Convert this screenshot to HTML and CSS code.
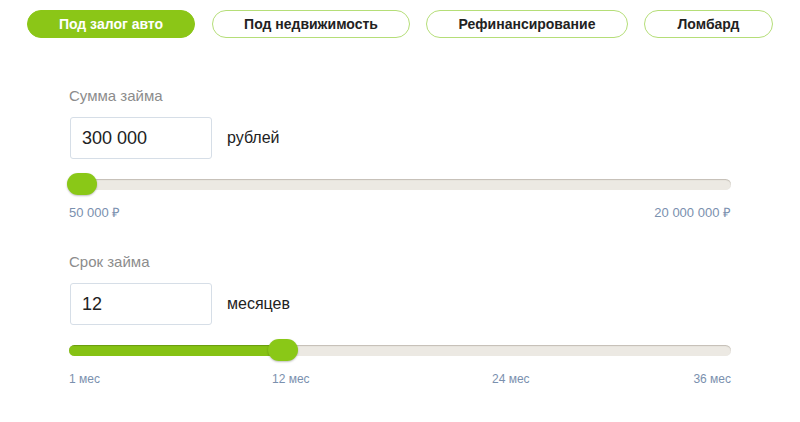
FILE: index.html
```html
<!DOCTYPE html>
<html lang="ru">
<head>
<meta charset="utf-8">
<link rel="stylesheet" href="styles.css">
</head>
<body>
<div class="page">
  <nav class="tabs">
    <button class="tab tab-active">Под залог авто</button>
    <button class="tab tab-2">Под недвижимость</button>
    <button class="tab tab-3">Рефинансирование</button>
    <button class="tab tab-4">Ломбард</button>
  </nav>

  <div class="calc">
    <section class="field">
      <div class="label">Сумма займа</div>
      <div class="row">
        <div class="input">300 000</div>
        <div class="unit">рублей</div>
      </div>
      <div class="slider">
        <div class="track"></div>
        <div class="thumb" style="left:-2px"></div>
      </div>
      <div class="scale">
        <span>50 000 ₽</span>
        <span>20 000 000 ₽</span>
      </div>
    </section>

    <section class="field field-2">
      <div class="label">Срок займа</div>
      <div class="row">
        <div class="input">12</div>
        <div class="unit">месяцев</div>
      </div>
      <div class="slider">
        <div class="track"><div class="fill" style="width:214px"></div></div>
        <div class="thumb" style="left:199px"></div>
      </div>
      <div class="ticks">
        <span>1 мес</span>
        <span>12 мес</span>
        <span>24 мес</span>
        <span>36 мес</span>
      </div>
    </section>
  </div>
</div>
</body>
</html>
```

FILE: styles.css
```css
* { box-sizing: border-box; }
html, body { margin: 0; padding: 0; background: #fff; }
body {
  font-family: "Liberation Sans", Arial, sans-serif;
  color: #222;
  width: 800px;
  height: 422px;
  overflow: hidden;
}
.page { padding-top: 10px; }

.tabs {
  display: flex;
  gap: 16px;
  padding-left: 27px;
}
.tab {
  height: 28px;
  border-radius: 14px;
  border: 1.5px solid #b5de78;
  background: #fff;
  font-family: "Liberation Sans", Arial, sans-serif;
  font-weight: bold;
  font-size: 14px;
  color: #222;
  padding: 0;
  display: flex;
  align-items: center;
  justify-content: center;
}
.tab-active {
  width: 168px;
  background: #8bc617;
  border-color: #8bc617;
  color: #fff;
}
.tab-2 { width: 198px; margin-left: 1px; }
.tab-3 { width: 202px; }
.tab-4 { width: 129px; }

.calc {
  width: 662px;
  margin-left: 69px;
  margin-top: 49px;
}
.field-2 { margin-top: 33px; }

.label {
  font-size: 15px;
  line-height: 18px;
  color: #8c8c8c;
}
.row {
  display: flex;
  align-items: center;
  margin-top: 12px;
}
.input {
  width: 142px;
  height: 42px;
  margin-left: 1px;
  border: 1px solid #d6dee7;
  border-radius: 3px;
  font-size: 18px;
  padding-left: 11px;
  display: flex;
  align-items: center;
  color: #222;
}
.unit {
  margin-left: 15px;
  font-size: 16px;
  color: #222;
}

.slider {
  position: relative;
  height: 22px;
  margin-top: 14px;
  display: flex;
  align-items: center;
}
.track {
  width: 100%;
  height: 11px;
  border-radius: 6px;
  background: #ece9e3;
  box-shadow: inset 0 1px 1px rgba(90, 80, 60, 0.28);
  overflow: hidden;
}
.fill {
  height: 100%;
  background: #86c214;
  box-shadow: inset 0 1px 1px rgba(40, 70, 0, 0.3);
}
.thumb {
  position: absolute;
  top: 0;
  width: 30px;
  height: 22px;
  border-radius: 11px;
  background: #8ac817;
  box-shadow: 0 1px 2px rgba(0, 0, 0, 0.25);
}

.scale {
  display: flex;
  justify-content: space-between;
  margin-top: 11px;
  font-size: 13px;
  line-height: 14px;
  color: #7a90ae;
}
.ticks {
  display: grid;
  grid-template-columns: 203px 220px 1fr auto;
  margin-top: 11px;
  font-size: 12px;
  line-height: 14px;
  color: #7a90ae;
}
```
